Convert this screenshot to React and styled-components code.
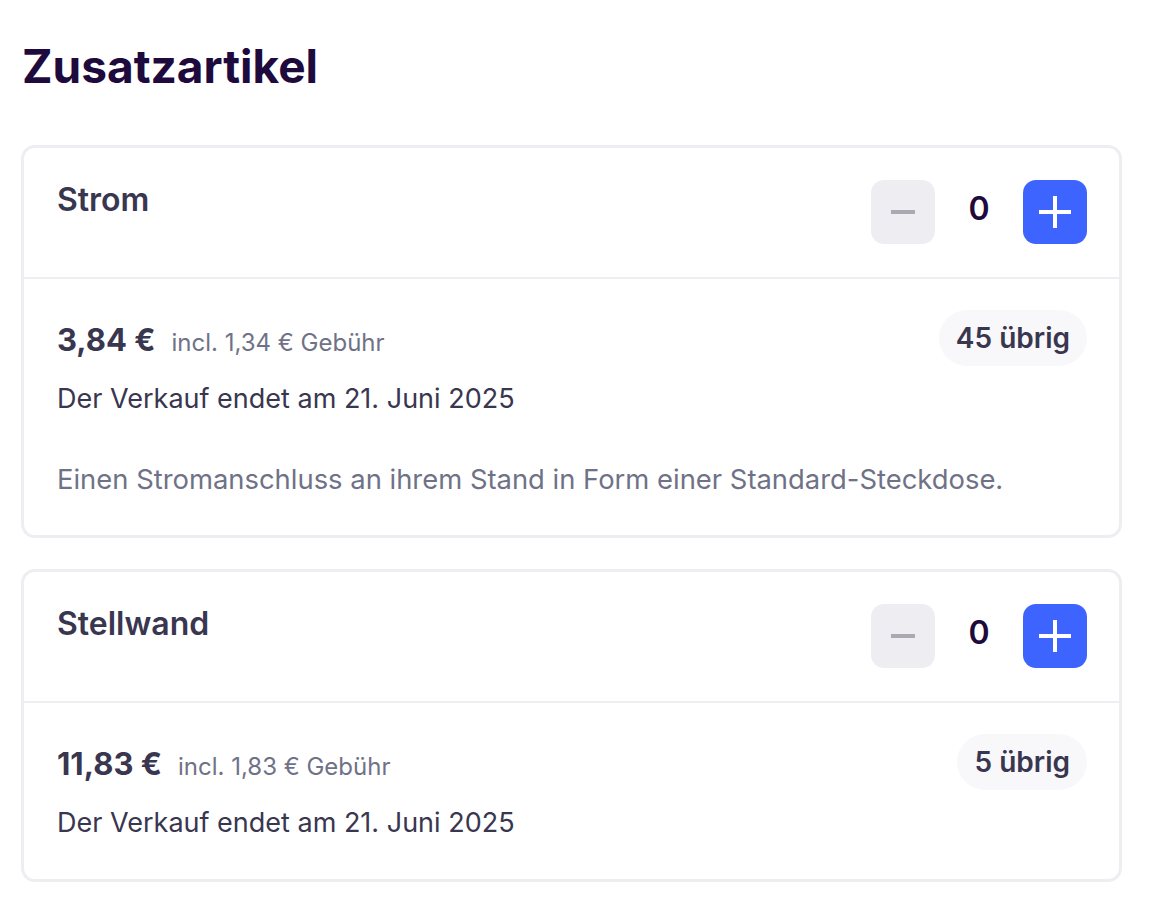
import React, { useState } from 'react'
import styled, { createGlobalStyle } from 'styled-components'

const GlobalStyle = createGlobalStyle`
  body {
    margin: 0;
    background: #ffffff;
    font-family: Inter, "Noto Sans", "Liberation Sans", sans-serif;
  }
`

const Page = styled.div`
  width: 1101px;
  padding: 38px 0 40px 21px;
`

const Title = styled.h1`
  margin: 0 0 51px 1px;
  font-size: 46px;
  line-height: 56px;
  font-weight: 700;
  color: #1e0a3c;
`

const List = styled.div`
  display: flex;
  flex-direction: column;
  gap: 31px;
`

const Card = styled.div`
  border: 3px solid #eeedf2;
  border-radius: 14px;
  background: #fff;
`

const Header = styled.div`
  display: flex;
  justify-content: space-between;
  align-items: flex-start;
  padding: 32px 32px 33px 33px;
  border-bottom: 2px solid #eeedf2;
`

const Name = styled.div`
  font-size: 32px;
  line-height: 40px;
  font-weight: 600;
  color: #39364f;
`

const Stepper = styled.div`
  display: flex;
  align-items: center;
`

const StepButton = styled.button`
  width: 64px;
  height: 64px;
  border: none;
  border-radius: 13px;
  padding: 0;
  display: flex;
  align-items: center;
  justify-content: center;
  cursor: pointer;
  background: ${p => (p.$primary ? '#3d64ff' : '#eeedf2')};
`

const Count = styled.span`
  width: 88px;
  padding-bottom: 7px;
  text-align: center;
  font-size: 32px;
  font-weight: 600;
  color: #1e0a3c;
`

const Body = styled.div`
  padding: 31px 32px 38px 33px;
`

const TopRow = styled.div`
  display: flex;
  justify-content: space-between;
  align-items: flex-start;
`

const PriceLine = styled.div`
  display: flex;
  align-items: baseline;
  gap: 16px;
  margin-top: 2px;
  line-height: 56px;
`

const Price = styled.span`
  font-size: 31px;
  font-weight: 700;
  color: #39364f;
`

const Fee = styled.span`
  font-size: 24px;
  color: #6f7287;
`

const DateLine = styled.div`
  margin-top: 10px;
  font-size: 27px;
  line-height: 36px;
  color: #39364f;
`

const Badge = styled.div`
  height: 56px;
  padding: 0 17px;
  border-radius: 28px;
  background: #f8f7fa;
  display: flex;
  align-items: center;
  font-size: 28px;
  font-weight: 600;
  color: #39364f;
`

const Description = styled.p`
  margin: 44px 0 0;
  font-size: 27.4px;
  line-height: 36px;
  color: #6f7287;
`

const MinusIcon = () => (
  <svg width="24" height="4" viewBox="0 0 24 4">
    <rect width="24" height="4" fill="#a9a8b3" />
  </svg>
)

const PlusIcon = () => (
  <svg width="32" height="32" viewBox="0 0 32 32">
    <rect x="0" y="14" width="32" height="4" fill="#fff" />
    <rect x="14" y="0" width="4" height="32" fill="#fff" />
  </svg>
)

const items = [
  {
    name: 'Strom',
    price: '3,84 €',
    fee: 'incl. 1,34 € Gebühr',
    left: 45,
    description: 'Einen Stromanschluss an ihrem Stand in Form einer Standard-Steckdose.',
  },
  {
    name: 'Stellwand',
    price: '11,83 €',
    fee: 'incl. 1,83 € Gebühr',
    left: 5,
  },
]

function ItemCard({ item }) {
  const [count, setCount] = useState(0)
  return (
    <Card>
      <Header>
        <Name>{item.name}</Name>
        <Stepper>
          <StepButton onClick={() => setCount(c => Math.max(0, c - 1))}>
            <MinusIcon />
          </StepButton>
          <Count>{count}</Count>
          <StepButton $primary onClick={() => setCount(c => Math.min(item.left, c + 1))}>
            <PlusIcon />
          </StepButton>
        </Stepper>
      </Header>
      <Body>
        <TopRow>
          <div>
            <PriceLine>
              <Price>{item.price}</Price>
              <Fee>{item.fee}</Fee>
            </PriceLine>
            <DateLine>Der Verkauf endet am 21. Juni 2025</DateLine>
          </div>
          <Badge>{item.left} übrig</Badge>
        </TopRow>
        {item.description && <Description>{item.description}</Description>}
      </Body>
    </Card>
  )
}

export default function App() {
  return (
    <>
      <GlobalStyle />
      <Page>
        <Title>Zusatzartikel</Title>
        <List>
          {items.map(item => (
            <ItemCard key={item.name} item={item} />
          ))}
        </List>
      </Page>
    </>
  )
}
